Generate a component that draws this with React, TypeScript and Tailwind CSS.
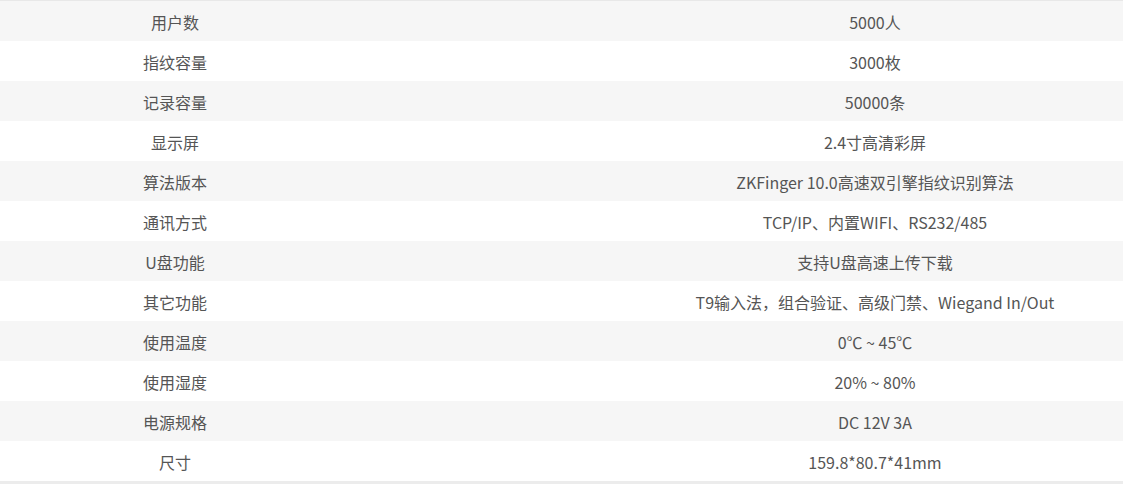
const rows: [string, string][] = [
  ["用户数", "5000人"],
  ["指纹容量", "3000枚"],
  ["记录容量", "50000条"],
  ["显示屏", "2.4寸高清彩屏"],
  ["算法版本", "ZKFinger 10.0高速双引擎指纹识别算法"],
  ["通讯方式", "TCP/IP、内置WIFI、RS232/485"],
  ["U盘功能", "支持U盘高速上传下载"],
  ["其它功能", "T9输入法，组合验证、高级门禁、Wiegand In/Out"],
  ["使用温度", "0℃ ~ 45℃"],
  ["使用湿度", "20% ~ 80%"],
  ["电源规格", "DC 12V 3A"],
  ["尺寸", "159.8*80.7*41mm"],
];

export default function App() {
  return (
    <div className="w-[1123px] h-[484px] overflow-hidden bg-[#ececec]">
      <table
        className="w-[1400px] border-t border-[#e8e8e8] text-[16px] text-[#555]"
        style={{ fontFamily: '"Noto Sans CJK SC", "Noto Sans", sans-serif' }}
      >
        <tbody>
          {rows.map(([k, v], i) => (
            <tr key={k} className={i % 2 === 0 ? "bg-[#f6f6f6]" : "bg-white"}>
              <td className="w-[350px] h-10 text-center p-0 pt-[3px]">{k}</td>
              <td className="h-10 text-center p-0 pt-[3px]">{v}</td>
            </tr>
          ))}
        </tbody>
      </table>
    </div>
  );
}
